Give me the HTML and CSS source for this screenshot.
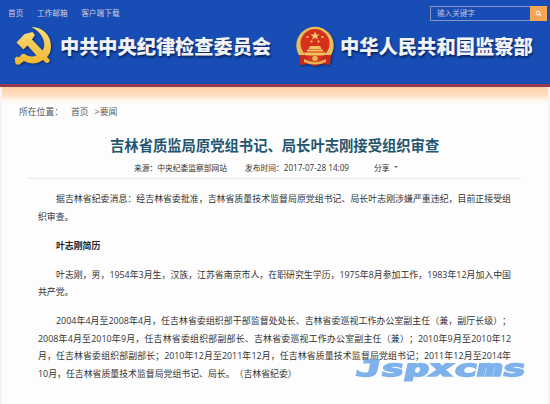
FILE: index.html
```html
<!DOCTYPE html>
<html lang="zh-CN">
<head>
<meta charset="utf-8">
<title>吉林省质监局原党组书记、局长叶志刚接受组织审查</title>
<link rel="stylesheet" href="styles.css">
</head>
<body>
<header class="header">
  <div class="topbar">
    <nav class="nav"><a>首页</a><a>工作邮箱</a><a>客户端下载</a></nav>
    <div class="search">
      <span class="search-text">输入关键字</span>
      <span class="search-btn"><svg width="7" height="7" viewBox="0 0 7 7"><circle cx="3" cy="3" r="1.9" fill="none" stroke="#fff" stroke-width="1"/><path d="M4.4 4.4L6.2 6.2" stroke="#fff" stroke-width="1.1"/></svg></span>
    </div>
  </div>
  <div class="brands">
    <svg class="party" width="42" height="44" viewBox="0 0 42 44">
      <defs><linearGradient id="gold" x1="0" y1="0" x2="0" y2="1"><stop offset="0" stop-color="#f8df7b"/><stop offset="1" stop-color="#f0b52d"/></linearGradient></defs>
      <path fill="url(#gold)" d="M19.500 3C30 2.500 39 11 39 22C39 27 37.500 30.500 35 33L37.500 35.500C38.500 38 36 40 33.500 38.500L31 36C25 40.500 17.500 40.500 12 37L7.500 40.500C5 41.500 2.500 39.500 3.200 36.800L2.500 34.500L5 32.500L7 33.500L10 30L13 30C17 33 21 33 24.500 31.500L15.500 21.500L11.500 25.500L4.500 18.500L12.500 10L20.500 8L23 11L20 15.500L30.500 26.500C35 20 31 9 19.500 3Z"/>
    </svg>
    <span class="brand brand-left">中共中央纪律检查委员会</span>
    <svg class="state" width="40" height="44" viewBox="0 0 40 44">
      <circle cx="20" cy="20.500" r="18.700" fill="#e8bd60"/>
      <path d="M4 30L36 30L35 40L27 39L20 41L13 39L5 40Z" fill="#c92a20"/>
      <path d="M9 34Q20 40 31 34L31 37Q20 42 9 37Z" fill="#e6b04f"/>
      <circle cx="20" cy="18.500" r="14.500" fill="#d6301d"/>
      <path fill="#f6cf69" d="M20 6.500L21.200 9.500L24.500 9.600L22 11.500L22.800 14.500L20 12.800L17.200 14.500L18 11.500L15.500 9.600L18.800 9.500Z"/>
      <path fill="#f4c25a" d="M11.500 11h2v2h-2zM26.500 11h2v2h-2zM15.500 15.500h2v2h-2zM22.500 15.500h2v2h-2zM15 21h10l1.500 3h-13zM12 24.500h16v2h-16zM9 27.500h22l-2 3h-18z"/>
      <path d="M12 30Q20 36 28 30L26 36L20 34L14 36Z" fill="#d9342a"/>
      <circle cx="20" cy="33.500" r="2.800" fill="#e9b451"/>
    </svg>
    <span class="brand brand-right">中华人民共和国监察部</span>
  </div>
</header>
<main class="page">
  <div class="crumbs"><span>所在位置：</span><span>首页</span><span>&gt;要闻</span></div>
  <h1>吉林省质监局原党组书记、局长叶志刚接受组织审查</h1>
  <div class="meta"><span class="source">来源：中央纪委监察部网站</span><span class="date">发布时间：<span class="time">2017-07-28 14:09</span></span><span class="share">分享</span><i class="caret"></i></div>
  <article>
    <p><span class="line first">据吉林省纪委消息：经吉林省委批准，吉林省质量技术监督局原党组书记、局长叶志刚涉嫌严重违纪，目前正接受组</span><span class="line last">织审查。</span></p>
    <p><strong class="line first last">叶志刚简历</strong></p>
    <p><span class="line first">叶志刚，男，1954年3月生，汉族，江苏省南京市人，在职研究生学历，1975年8月参加工作，1983年12月加入中国</span><span class="line last">共产党。</span></p>
    <p><span class="line first">2004年4月至2008年4月，任吉林省委组织部干部监督处处长、吉林省委巡视工作办公室副主任（兼，副厅长级）；</span><span class="line">2008年4月至2010年9月，任吉林省委组织部副部长、吉林省委巡视工作办公室副主任（兼）；2010年9月至2010年12</span><span class="line">月，任吉林省委组织部副部长；2010年12月至2011年12月，任吉林省质量技术监督局党组书记；2011年12月至2014年</span><span class="line last">10月，任吉林省质量技术监督局党组书记、局长。（吉林省纪委）</span></p>
  </article>
</main>
<svg class="watermark" width="184" height="36" viewBox="0 0 184 36"><text transform="translate(4 22) skewX(-12)" textLength="170" lengthAdjust="spacingAndGlyphs">Jspxcms</text></svg>
</body>
</html>
```
FILE: styles.css
```css
* { box-sizing: border-box; }
body {
  margin: 0;
  width: 550px;
  height: 404px;
  position: relative;
  overflow: hidden;
  background: #fdfdfd;
  color: #333;
  font-family: "Open Sans", "Noto Sans CJK SC", sans-serif;
  text-spacing-trim: space-all;
}
.header {
  height: 87px;
  background: #174db4;
  border-bottom: 3px solid #963a54;
}
.topbar {
  height: 21px;
  padding: 6px 3px 0 8px;
  display: flex;
  justify-content: space-between;
}
.nav {
  display: flex;
  gap: 13.500px;
  font-size: 7.700px;
  line-height: 15px;
  color: #d3c9dc;
}
.search {
  width: 117px;
  height: 15px;
  display: flex;
  justify-content: space-between;
  border: 1px solid #8794c5;
}
.search-text {
  padding-left: 6px;
  font-size: 7.600px;
  line-height: 13px;
  color: #c5bdda;
}
.search-btn {
  width: 17px;
  height: 15px;
  margin: -1px -1px 0 0;
  display: flex;
  align-items: center;
  justify-content: center;
  background: #f7a653;
}
.brands {
  display: flex;
  height: 52px;
  padding: 3px 0 0 12px;
}
.party, .state { flex: none; filter: drop-shadow(1px 1px 1px #0b2b70); }
.state { margin: 1px 0 0 23px; }
.brand {
  flex: none;
  font-size: 19.200px;
  line-height: 28px;
  font-weight: 900;
  white-space: nowrap;
  color: #f2f3f6;
  text-shadow: 1px 2px 2px #0a2664;
}
.brand-left { width: 212px; margin: 9px 0 0 6px; }
.brand-right { margin: 9px 0 0 5px; font-size: 19.300px; }
.page {
  height: 317px;
  padding-top: 17px;
  border: solid #f6f4f2;
  border-width: 0 2px;
  background: linear-gradient(#fdd0a5, #fee1c8 9px, #fff5ec 13px, #fdfdfd 17px);
}
.crumbs {
  display: flex;
  gap: 6px;
  padding-left: 17px;
  font-size: 8.800px;
  line-height: 17px;
  color: #555;
}
.crumbs span:first-child { margin-right: 2px; }
h1 {
  margin: 14px 0 0;
  padding-left: 108px;
  font-size: 14.320px;
  line-height: 22px;
  font-weight: 700;
  white-space: nowrap;
  color: #245570;
}
.meta {
  display: flex;
  align-items: center;
  height: 22px;
  margin: 0 27px 0 26px;
  padding: 0 0 1px 106px;
  border-bottom: 1px solid #ebebeb;
  font-size: 7.750px;
  white-space: nowrap;
}
.source { width: 111px; }
.date { width: 129px; }
.time { font-size: 8.150px; }
.caret {
  margin-left: 4px;
  border: 2.500px solid transparent;
  border-top-color: #666;
  border-bottom: 0;
}
article { padding: 11px 0 0 36px; }
p { margin: 0 0 11.500px; }
.line {
  display: block;
  width: 473px;
  font-size: 8.900px;
  line-height: 17.500px;
  white-space: nowrap;
  text-align: justify;
  text-align-last: justify;
}
.first { padding-left: 18px; }
.last { text-align-last: left; }
strong { color: #222; }
.watermark { position: absolute; left: 351px; top: 354px; }
.watermark text {
  font: 700 22px "DejaVu Sans Mono", monospace;
  fill: #5c9ee8;
  stroke: #5c9ee8;
  stroke-width: 1.700px;
  opacity: .78;
}
```
